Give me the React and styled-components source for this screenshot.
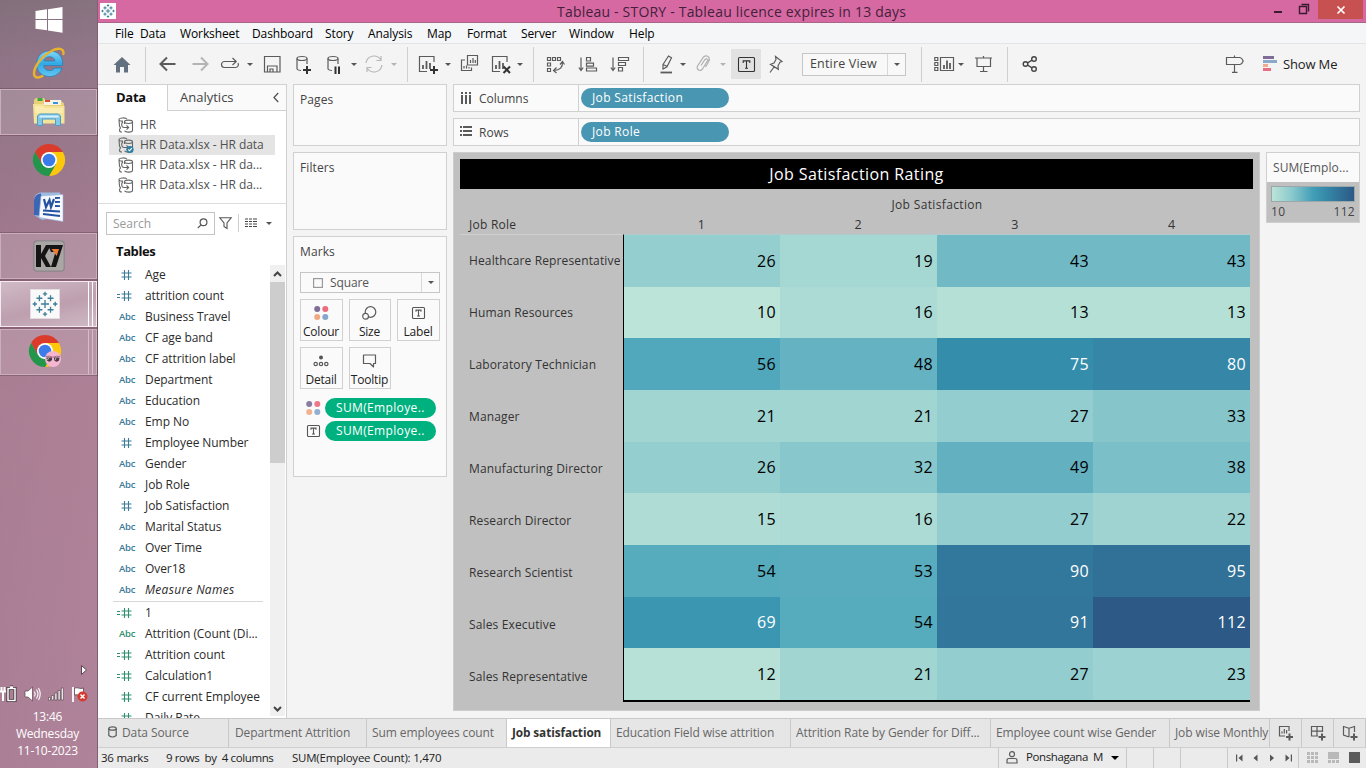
import React from 'react';
import styled, { createGlobalStyle, css } from 'styled-components';

const Global = createGlobalStyle`
  * { box-sizing: border-box; }
  html, body { margin: 0; padding: 0; }
  body { width: 1366px; height: 768px; overflow: hidden; font-family: "Open Sans", "Noto Sans", sans-serif; font-size: 12px; color: #333; }
  svg { display: block; flex: none; overflow: visible; }
`;

/* ---------- shell ---------- */
const Screen = styled.div`display: flex; width: 1366px; height: 768px; overflow: hidden;`;
const Taskbar = styled.aside`
  width: 98px; flex: none; display: flex; flex-direction: column;
  background: linear-gradient(100deg, rgba(60,60,60,.05), rgba(255,190,220,.06)), linear-gradient(180deg, #86727f 0, #93768a 60px, #98788a 130px, #a27a90 230px, #ac7f95 400px, #aa7f95 768px);
  border-right: 1px solid #805f70;
`;
const TaskSlot = styled.div`
  height: ${p => p.$h || 48}px; width: 97px; flex: none; display: flex; align-items: center; justify-content: center;
  margin-bottom: ${p => p.$mb || 0}px;
`;
const TaskButton = styled.div`
  height: 46px; width: 97px; margin-bottom: 2px; flex: none; display: flex; align-items: center;
  border: 1px solid ${p => (p.$active ? '#f4eaf0' : '#c9aebb')};
  outline: 1px solid rgba(90,50,70,.35);
  background: ${p => (p.$active ? 'linear-gradient(165deg,#d0bac6,#bd9fae 55%,#d0b9c5)' : 'rgba(255,255,255,.16)')};
`;
const TaskFace = styled.div`
  flex: 1; height: 100%; display: flex; align-items: center; justify-content: center;
  ${p => p.$stack && css`border-right: 1px solid ${p.$active ? '#fff' : '#d5bdc9'}; margin-right: 3px;`}
`;
const StackEdge = styled.div`width: 4px; height: 100%; border-left: 1px solid ${p => (p.$active ? '#fff' : '#d5bdc9')};`;
const AppTile = styled.div`width: 30px; height: 30px; background: #fafafa; border: 1px solid #e3dce0; display: flex; align-items: center; justify-content: center;`;
const TrayMore = styled.div`height: 14px; margin-top: 288px; display: flex; justify-content: flex-end; padding-right: 10px;`;
const Tray = styled.div`height: 20px; margin-top: 5px; display: flex; align-items: center; gap: 7px;`;
const Clock = styled.div`margin-top: 4px; text-align: center; color: #fff; font-size: 12px; line-height: 17px; letter-spacing: -.2px; padding-right: 2px;`;

const Main = styled.main`width: 1268px; display: flex; flex-direction: column; background: #f4f4f4;`;
const TitleBar = styled.header`
  height: 23px; flex: none; display: flex; background: #d669a2; border-bottom: 1px solid #a86587; color: #43213a;
`;
const AppBadge = styled.div`width: 16px; height: 16px; margin: 3px 0 0 2px; background: #fff; display: flex; align-items: center; justify-content: center;`;
const Title = styled.div`flex: 1; padding-left: 441px; font-size: 14px; line-height: 23px; letter-spacing: .2px; white-space: nowrap;`;
const WinButtons = styled.div`display: flex; align-items: flex-start;`;
const CloseButton = styled.div`width: 45px; height: 19px; margin-left: 9px; margin-right: 3px; background: #c75050; display: flex; align-items: center; justify-content: center;`;
const MenuBar = styled.nav`height: 21px; flex: none; display: flex; padding-left: 17px; background: #f4f6f8; border-bottom: 1px solid #e2e4e6; color: #000;`;
const MenuItem = styled.div`width: ${p => p.$w}px; flex: none; font-size: 12px; line-height: 22px; letter-spacing: -.1px; white-space: nowrap;`;

/* ---------- toolbar ---------- */
const Toolbar = styled.div`height: 40px; flex: none; display: flex; align-items: center; color: #333;`;
const Tool = styled.div`
  width: ${p => p.$w || 20}px; height: ${p => p.$h || 20}px; margin-left: ${p => p.$ml}px; flex: none;
  display: flex; align-items: center; justify-content: center; background: ${p => p.$bg || 'transparent'};
`;
const Caret = styled.div`
  width: 0; height: 0; flex: none; margin-left: ${p => p.$ml || 0}px; border: ${p => p.$s || 3}px solid transparent;
  border-top-color: ${p => p.$c || '#555'}; border-bottom: 0;
`;
const Separator = styled.div`width: 1px; height: 35px; flex: none; margin-left: ${p => p.$ml}px; background: #cfcfcf;`;
const FitSelect = styled.div`width: 104px; height: 23px; margin-left: 17px; flex: none; display: flex; border: 1px solid #c6c6c6; color: #444; background: #f8f8f8; line-height: 20px; font-size: 12.5px; letter-spacing: .17px;`;
const SelectText = styled.div`flex: 1; display: flex; align-items: center; gap: 7px; padding-left: ${p => p.$pl}px; white-space: nowrap;`;
const SelectArrow = styled.div`width: 18px; border-left: 1px solid #d8d8d8; display: flex; align-items: center; justify-content: center;`;
const ShowMe = styled.div`margin-left: 1px; margin-top: -1px; font-size: 13px; color: #222; letter-spacing: -.15px; white-space: nowrap;`;

/* ---------- data pane ---------- */
const Workspace = styled.div`height: 634px; flex: none; display: flex;`;
const DataPane = styled.section`width: 189px; height: 634px; flex: none; background: #fff; border-right: 1px solid #d0d0d0; display: flex; flex-direction: column; overflow: hidden;`;
const PaneTabs = styled.div`height: 27px; flex: none; display: flex;`;
const PaneTab = styled.div`
  height: 27px; font-size: 13px; line-height: 25px; white-space: nowrap; border-top: 1px solid #d0d0d0;
  ${p => p.$active
    ? css`width: 69px; padding-left: 18px; font-weight: 700; color: #111; letter-spacing: -.3px;`
    : css`flex: 1; display: flex; align-items: center; justify-content: space-between; padding: 0 7px 0 12px; color: #444; background: #fafafa; border-left: 1px solid #d0d0d0; border-bottom: 1px solid #d0d0d0;`}
`;
const Sources = styled.div`height: 93px; flex: none; padding: 4px 0 0 11px; border-bottom: 1px solid #ddd;`;
const SourceRow = styled.div`
  width: 166px; height: 20px; display: flex; align-items: center; gap: 6px; padding: 0 0 1px 9px; color: #505050;
  font-size: 12px; white-space: nowrap; letter-spacing: -.04px; background: ${p => (p.$on ? '#e4e4e4' : 'transparent')};
`;
const SearchRow = styled.div`height: 38px; flex: none; display: flex; align-items: center; padding-left: 8px;`;
const SearchBox = styled.div`width: 109px; height: 23px; border: 1px solid #c4c4c4; display: flex; align-items: center; justify-content: space-between; padding: 0 6px; color: #999; font-size: 12px;`;
const ThinRule = styled.div`width: 1px; height: 18px; margin: 0 6px; background: #ccc;`;
const PaneHeading = styled.div`height: 23px; flex: none; padding-left: 18px; font-size: 13px; font-weight: 700; line-height: 18px; color: #111; letter-spacing: -.4px;`;
const FieldArea = styled.div`flex: 1; display: flex; overflow: hidden; min-height: 0;`;
const FieldList = styled.div`width: 172px; flex: none;`;
const Field = styled.div`
  height: 21px; display: flex; align-items: center; padding-bottom: 3px; color: #2b2b2b; font-size: 12px; white-space: nowrap;
  font-style: ${p => (p.$italic ? 'italic' : 'normal')}; letter-spacing: ${p => (p.$italic ? 0.3 : -0.07)}px;
`;
const FieldMark = styled.div`
  width: 47px; flex: none; display: flex; justify-content: flex-end; padding-right: ${p => (p.$abc ? 9.5 : 13)}px; padding-top: 1px;
  color: ${p => (p.$measure ? '#2f8f6f' : '#3b7a99')}; font-size: 9.5px; font-weight: 600; font-style: normal; letter-spacing: -.1px;
`;
const FieldRule = styled.div`height: 1px; margin: 0 7px 1px 15px; background: #d8d8d8;`;
const Scrollbar = styled.div`width: 15px; height: 451px; background: #f0f0f0; display: flex; flex-direction: column; align-items: center;`;
const ScrollButton = styled.div`width: 15px; height: 17px; flex: none; display: flex; align-items: center; justify-content: center;`;
const ScrollThumb = styled.div`width: 15px; height: 181px; flex: none; margin-bottom: 237px; background: #cdcdcd;`;

/* ---------- cards ---------- */
const CardColumn = styled.section`width: 154px; flex: none; margin-left: 6px; display: flex; flex-direction: column; gap: 6px;`;
const Card = styled.div`height: ${p => p.$h}px; flex: none; border: 1px solid #d0d0d0; background: #fafafa; padding: 0 6px;`;
const CardTitle = styled.div`height: 30px; line-height: 30px; font-size: 12px; color: #444; letter-spacing: .1px;`;
const MarkSelect = styled.div`height: 21px; margin-top: 5px; border: 1px solid #c6c6c6; display: flex; color: #555; font-size: 12px; line-height: 18px; letter-spacing: -.1px;`;
const MarkGrid = styled.div`margin-top: 6px; display: grid; grid-template-columns: 43px 42px 43px; gap: 6px;`;
const MarkButton = styled.div`
  height: 42px; border: 1px solid #d0d0d0; display: flex; flex-direction: column; align-items: center; justify-content: space-between;
  padding: 3px 1px 0 0; font-size: 12px; line-height: 17px; color: #222; letter-spacing: -.2px; white-space: nowrap;
`;
const EncodingRow = styled.div`height: 20px; margin-top: ${p => p.$mt}px; display: flex; align-items: center; padding-left: 6px; gap: 4px;`;
const Pill = styled.div`
  width: ${p => p.$w}px; height: 20px; border-radius: 10px; padding-left: 11px; line-height: 19px; color: #fff; white-space: nowrap;
  background: ${p => p.$c}; font-size: 12px; letter-spacing: .35px;
`;

/* ---------- view ---------- */
const ViewColumn = styled.section`margin-left: 6px; width: 907px; flex: none; display: flex; flex-direction: column; gap: 6px;`;
const Shelf = styled.div`height: 28px; flex: none; display: flex; align-items: center; border: 1px solid #d0d0d0; background: #fafafa;`;
const ShelfLabel = styled.div`width: 125px; height: 26px; display: flex; align-items: center; gap: 7px; padding-left: 6px; margin-right: 2px; border-right: 1px solid #d0d0d0; font-size: 12px; color: #444;`;
const ViewRow = styled.div`display: flex; gap: 6px; align-items: flex-start;`;
const Sheet = styled.div`width: 807px; height: 559px; border: 1px solid #cdcdcd; background: #c0c0c0; padding: 6px;`;
const SheetTitle = styled.h1`margin: 0; width: 793px; height: 30px; background: #000; color: #fff; font-weight: 400; font-size: 16px; line-height: 30px; text-align: center; letter-spacing: .4px;`;
const AxisTitle = styled.div`height: 24px; padding: 7px 0 0 164px; width: 790px; text-align: center; line-height: 18px; font-size: 12px; color: #333; letter-spacing: .35px;`;
const HeaderRow = styled.div`width: 790px; height: 21px; display: grid; grid-template-columns: 163px repeat(4, 1fr); line-height: 23px; color: #333;`;
const HeaderCell = styled.div`text-align: ${p => (p.$left ? 'left' : 'center')}; padding-left: ${p => (p.$left ? 9 : 0)}px; font-size: ${p => (p.$left ? 12 : 12.5)}px; letter-spacing: ${p => (p.$left ? 0.25 : 0)}px;`;
const HeatTable = styled.div`width: 790px; height: 468px; display: grid; grid-template-columns: 164px 1fr;`;
const RowLabels = styled.div`display: grid; grid-template-rows: repeat(9, 1fr); border-right: 1px solid #000; border-top: 1px solid #cfcfcf; padding-left: 9px; color: #333; font-size: 12px; letter-spacing: .14px;`;
const RowLabel = styled.div`display: flex; align-items: center; white-space: nowrap;`;
const HeatGrid = styled.div`display: grid; grid-template: repeat(9, 1fr) / 156px 157px 156px 157px; border-bottom: 2px solid #000; border-top: 1px solid #b0ccd0;`;
const HeatCell = styled.div`display: flex; align-items: center; justify-content: flex-end; padding-right: 4px; font-size: 16px; background: ${p => p.$bg}; color: ${p => (p.$light ? '#fff' : '#000')}; letter-spacing: .35px;`;
const Legend = styled.div`width: 94px; height: 71px; border: 1px solid #cfcfcf; background: #c0c0c0;`;
const LegendTitle = styled.div`height: 29px; background: #fafafa; padding-left: 6px; line-height: 30px; font-size: 12px; color: #555; white-space: nowrap; letter-spacing: .1px;`;
const LegendBar = styled.div`height: 16px; margin: 4px 4px 0; border: 1px solid #9ba7a9; background: linear-gradient(90deg,#bce4d8,#89c8cc 25%,#419eb6 50%,#3586a7 68%,#2c5985);`;
const LegendRange = styled.div`display: flex; justify-content: space-between; padding: 0 4px; line-height: 19px; color: #444; letter-spacing: .3px;`;

/* ---------- footer ---------- */
const SheetTabs = styled.div`height: 30px; flex: none; display: flex; background: #e6e6e6; border-top: 1px solid #c9c9c9; border-bottom: 1px solid #cfcfcf;`;
const SheetTab = styled.div`
  width: ${p => p.$w}px; height: 28px; flex: none; border-right: 1px solid #c9c9c9; padding: 0 0 2px ${p => p.$pl || 5}px; display: flex; align-items: center; gap: 5px;
  font-size: 12px; letter-spacing: -.1px; white-space: nowrap; overflow: hidden; color: #666;
  ${p => p.$active && css`background: #fff; font-weight: 700; color: #333; letter-spacing: -.1px; font-size: 11.8px; padding-bottom: 3px;`}
`;
const NewTab = styled.div`width: 32px; height: 28px; flex: none; border-right: 1px solid #c9c9c9; display: flex; align-items: center; justify-content: center;`;
const StatusBar = styled.footer`height: 20px; flex: none; display: flex; align-items: center; background: #ebebeb; color: #222; font-size: 11.5px;`;
const StatusText = styled.div`width: ${p => p.$w}px; flex: none; margin-left: ${p => p.$ml || 0}px; padding-bottom: 2px; letter-spacing: ${p => p.$ls || 0}px; white-space: pre;`;
const StatusCell = styled.div`width: ${p => p.$w}px; height: 20px; flex: none; border-left: 1px solid #c9c9c9; display: flex; align-items: center; padding-left: ${p => p.$pl || 0}px; padding-bottom: 1px; gap: ${p => p.$gap || 0}px;`;

/* ---------- icons ---------- */
const G = '#5b5b5b';
const Ico = ({ children, w = 20, h = 20, c = G, sw = 1.2 }) => (
  <svg width={w} height={h} viewBox={`0 0 ${w} ${h}`} fill="none" stroke={c} strokeWidth={sw}>{children}</svg>
);
const Plus = ({ x, y, r = 4 }) => <path d={`M${x - r} ${y}H${x + r}M${x} ${y - r}V${y + r}`} stroke="#333" strokeWidth="2" />;

const TableauMark = ({ size, c = '#3f7d99' }) => {
  const arms = [[14, 14, 4.4], [14, 3, 2.3], [14, 25, 2.3], [3, 14, 2.3], [25, 14, 2.3], [8, 7.8, 3.2], [20, 7.8, 3.2], [8, 20.2, 3.2], [20, 20.2, 3.2]];
  return (
    <svg width={size} height={size} viewBox="0 0 28 28" stroke={c} strokeWidth={size < 20 ? 2 : 1.4}>
      {arms.map(([x, y, r], i) => <path key={i} d={`M${x - r} ${y}H${x + r}M${x} ${y - r}V${y + r}`} />)}
    </svg>
  );
};
const ChromeDisc = () => (
  <>
    <path d="M2.1 8A16 16 0 0 1 29.9 8H16L9 20z" fill="#db3b2b" />
    <path d="M29.900 8A16 16 0 0 1 16 32L23 20 16 8z" fill="#fdc70c" />
    <path d="M16 32A16 16 0 0 1 2.100 8L9 20 23 20z" fill="#22964a" />
    <circle cx="16" cy="16" r="8" fill="#fff" /><circle cx="16" cy="16" r="6.300" fill="#3b7cea" />
  </>
);
const Chrome = () => <svg width="32" height="32" viewBox="0 0 32 32"><ChromeDisc /></svg>;
const ChromeProfile = () => (
  <svg width="32" height="34" viewBox="0 0 32 34">
    <ChromeDisc />
    <circle cx="24" cy="24" r="8" fill="#f6b6d0" />
    <path d="M17 21.500q3.500-1 7 .8 3.500-1.800 7-.8" stroke="#9c7187" fill="none" />
    <path d="M17.500 22.500h5.500v2.500q-2.500 3-5 .5zM25 22.500h5.500l-.5 3q-2.500 2.500-5-.5z" fill="#4a3a45" />
    <path d="M19.500 23l-1 2M27 23l-1 2" stroke="#cdbac5" />
  </svg>
);
const WindowsLogo = () => (
  <svg width="28" height="26" viewBox="0 0 28 26" fill="#fff"><path d="M.5 4L12 2.3V12H.5zM13 2.2L27.5 0v12H13zM.5 13H12v10.2L.5 21.700zM13 13h14.500v12.800L13 23.500z" /></svg>
);
const Explorer = () => (
  <svg width="32" height="30" viewBox="0 0 32 30">
    <path d="M1 5V3l2-2h8l1.500 2.500H28l3 3V26H1z" fill="#e9cf77" />
    <path d="M4.500 1h5v3h-5z" fill="#39a843" /><path d="M11 3h17v5H11z" fill="#f7f4e6" /><path d="M12 3h5v2h-5z" fill="#d8502c" /><path d="M20 5h5v2h-5z" fill="#3c95d8" />
    <path d="M0 7h10l2 2h19.500v17.500H1z" fill="#f5e398" /><path d="M2 9h8l2 2h18v5H2z" fill="#fbf0b8" opacity=".7" />
    <path d="M4.500 28.500V19l2-2h19l2 2v9.500h-5V22h-13v6.500z" fill="#83c8e8" stroke="#4b9fc9" />
    <path d="M6.500 19.500h19" stroke="#d5f1fb" strokeWidth="2" />
  </svg>
);
const Explore = () => (
  <svg width="32" height="32" viewBox="0 0 32 32">
    <defs><linearGradient id="ie" x1="0" y1="0" x2="0" y2="1"><stop stopColor="#82d8fa" /><stop offset=".5" stopColor="#31a9e5" /><stop offset="1" stopColor="#63c5f0" /></linearGradient></defs>
    <path d="M16.500 4C9 4 3.500 9.700 3.500 17S9 29.500 16.500 29.500c6 0 10.700-3.300 12.500-8.500h-7.500c-1 1.700-2.700 2.500-5 2.500-3.300 0-5.500-2-5.800-5h18.800C30.500 9.500 25 4 16.500 4zM10.900 14c.6-2.600 2.700-4.300 5.600-4.300s5 1.700 5.500 4.300z" fill="url(#ie)" stroke="#1c7fb8" strokeWidth=".7" />
    <path d="M30.500 7C31 1 25 .5 18.500 4 9.500 8.500 1.500 19 1 26c-.3 4.800 3.700 5.600 8.500 3" fill="none" stroke="#e9b32d" strokeWidth="2.400" strokeLinecap="round" />
  </svg>
);
const Word = () => (
  <svg width="31" height="30" viewBox="0 0 31 30">
    <path d="M1 7Q2 1 8 .5H27l1 4V24L9 28 1 23z" fill="#9dbbe3" />
    <path d="M1 8Q2 2 8 1.500L10 24 1 23z" fill="#3b66b4" />
    <path d="M8 4l22-1.500V29.500L6 25.500z" fill="#f6f9fe" stroke="#9eb4d8" strokeWidth=".6" />
    <path d="M11 7l2 8 3.500-7 1.500 7L21 7" fill="none" stroke="#2552a0" strokeWidth="2.200" />
    <path d="M22 6l5-.2M22 10l5-.2M22 14l5 .2M10 18.500l17 1M10 22l17 2" stroke="#2552a0" strokeWidth="1.800" />
  </svg>
);
const K7 = () => (
  <svg width="32" height="32" viewBox="0 0 32 32">
    <rect x=".8" y=".8" width="30.400" height="30.400" rx="3.500" fill="#aaa6a6" stroke="#8b8589" strokeWidth="1.200" />
    <path d="M3 5h5v9l5-9h5l-6 11 6 11h-5l-5-9v9H3z" fill="#151515" /><path d="M15 5h15L23 27h-5l4.500-15H18z" fill="#151515" />
    <path d="M18.500 9h7.500l-2.300 7z" fill="#ee7b35" />
  </svg>
);
const DbIcon = ({ checked }) => (
  <Ico w={16} h={16} c="#666" sw={1.1}>
    <path d="M4 15H3Q1.200 14.500 1.500 12.500L2.500 11 1.500 9 1 2.500C1 .7 8 .2 9 2.200M1 3c1 1.200 2 1.300 4 1M5 4.500Q3.500 6 3.700 8" />
    <ellipse cx="10.500" cy="4.800" rx="4" ry="1.700" /><path d="M6.500 5v2M14.500 5v8.500c0 2-7 2.200-8 .2M3.700 8Q4 10.500 6 10.500h4.500M8.500 8.300l2.200 2.200-2.200 2.200" />
    {checked && <g stroke="none"><circle cx="12" cy="12.500" r="3.600" fill="#2f7ea3" /><path d="M10.300 12.500l1.300 1.300 2.200-2.600" fill="none" stroke="#fff" /></g>}
  </Ico>
);
const HashMark = ({ calc }) => (
  <svg width={calc ? 15 : 11} height="10" viewBox={calc ? '-4 0 15 10' : '0 0 11 10'} stroke="currentColor" strokeWidth="1.100" fill="none">
    <path d="M3.500 0V10M7.500 0V10M.5 3H10.500M.5 7H10.500" />{calc && <path d="M-4 3.500h3M-4 6.500h3" />}
  </svg>
);
const ColourDots = ({ pale }) => (
  <svg width="15" height="14" viewBox="0 0 15 14" opacity={pale ? 0.9 : 1}>
    <circle cx="3.200" cy="3" r="3" fill="#7f6f98" /><circle cx="11.300" cy="3" r="3" fill="#ed6b7b" />
    <circle cx="3.200" cy="11" r="3" fill="#f1a983" /><circle cx="11.300" cy="11" r="3" fill="#86a7cb" />
  </svg>
);
const LabelT = ({ w = 13, h = 12, c = '#555', r = 2.5 }) => (
  <svg width={w} height={h} viewBox={`0 0 ${w} ${h}`} fill="none" stroke={c} strokeWidth="1.100">
    <rect x=".5" y=".5" width={w - 1} height={h - 1} rx="1" />
    <path d={`M${w / 2 - r} ${h * 0.4}V${h * 0.26}H${w / 2 + r}V${h * 0.4}M${w / 2} ${h * 0.26}V${h * 0.75}M${w / 2 - 1.5} ${h * 0.75}h3`} />
  </svg>
);
const ChartBox = () => <><path d="M16 8V2.500H1.500V17.500H9" /><path d="M5 15V11M8.500 15V7M12 15V9" strokeWidth="1.800" /></>;

/* ---------- data ---------- */
const MENU = [['File', 25], ['Data', 40], ['Worksheet', 72], ['Dashboard', 73], ['Story', 43], ['Analysis', 59], ['Map', 40], ['Format', 54], ['Server', 48], ['Window', 60], ['Help', 40]];
const DIMENSIONS = [['#', 'Age'], ['=#', 'attrition count'], ['Abc', 'Business Travel'], ['Abc', 'CF age band'], ['Abc', 'CF attrition label'], ['Abc', 'Department'], ['Abc', 'Education'], ['Abc', 'Emp No'], ['#', 'Employee Number'], ['Abc', 'Gender'], ['Abc', 'Job Role'], ['#', 'Job Satisfaction'], ['Abc', 'Marital Status'], ['Abc', 'Over Time'], ['Abc', 'Over18'], ['Abc', 'Measure Names', true]];
const MEASURES = [['=#', '1'], ['Abc', 'Attrition (Count (Di...'], ['=#', 'Attrition count'], ['=#', 'Calculation1'], ['#', 'CF current Employee'], ['#', 'Daily Rate']];
const ROLES = [
  ['Healthcare Representative', 26, 19, 43, 43], ['Human Resources', 10, 16, 13, 13], ['Laboratory Technician', 56, 48, 75, 80],
  ['Manager', 21, 21, 27, 33], ['Manufacturing Director', 26, 32, 49, 38], ['Research Director', 15, 16, 27, 22],
  ['Research Scientist', 54, 53, 90, 95], ['Sales Executive', 69, 54, 91, 112], ['Sales Representative', 12, 21, 27, 23],
];
const RAMP = ['bce4d8', 'aedcd5', 'a1d5d2', '95cecf', '89c8cc', '7ec1ca', '72bac6', '66b2c2', '59acbe', '4ba5ba', '419eb6', '3b96b2', '358ead', '3586a7', '347ea1', '32779b', '316f96', '2f6790', '2d608a', '2c5985'];
const rampColor = v => {
  const t = ((v - 10) / 102) * 19;
  const i = Math.min(18, Math.floor(t));
  const ch = (s, k) => parseInt(s.slice(k, k + 2), 16);
  const mix = k => Math.round(ch(RAMP[i], k) + (ch(RAMP[i + 1], k) - ch(RAMP[i], k)) * (t - i));
  return `rgb(${mix(0)},${mix(2)},${mix(4)})`;
};

const FieldItem = ({ kind, name, italic, measure }) => (
  <Field $italic={italic}>
    <FieldMark $abc={kind === 'Abc'} $measure={measure}>{kind === 'Abc' ? 'Abc' : <HashMark calc={kind === '=#'} />}</FieldMark>{name}
  </Field>
);

const Sidebar = () => (
  <Taskbar>
    <TaskSlot $h={40}><WindowsLogo /></TaskSlot>
    <TaskSlot $h={46} $mb={3}><Explore /></TaskSlot>
    <TaskButton><TaskFace><Explorer /></TaskFace></TaskButton>
    <TaskSlot $h={46}><Chrome /></TaskSlot>
    <TaskSlot $h={48} $mb={2}><Word /></TaskSlot>
    <TaskButton><TaskFace><K7 /></TaskFace></TaskButton>
    <TaskButton $active><TaskFace $stack $active><AppTile><TableauMark size={26} /></AppTile></TaskFace><StackEdge $active /></TaskButton>
    <TaskButton><TaskFace $stack><ChromeProfile /></TaskFace><StackEdge /></TaskButton>
    <TrayMore><svg width="6" height="10" viewBox="0 0 6 10"><path d="M.5 .5L5.500 5 .5 9.500z" fill="#fff" stroke="#5b4350" /></svg></TrayMore>
    <Tray>
      <svg width="17" height="16" viewBox="0 0 17 16" fill="none" stroke="#fff" strokeWidth="1.500"><path d="M1.500 1v4M4.500 1v4M0 5.500h6M3 6v9" strokeWidth="2" /><path d="M8 2.500h7v12H8zM10 1h3" stroke="#3b2c35" strokeWidth="3" /><path d="M8 2.500h7v12H8zM10 1h3" /></svg>
      <svg width="17" height="16" viewBox="0 0 17 16" fill="#fff" stroke="#5b4350" strokeWidth=".7"><path d="M1 5h3l4.500-4v14L4 11H1z" /><path d="M10.500 5.500q1.500 2.500 0 5M12.500 3.500q3 4.500 0 9M14.500 2q3.500 6 0 12" fill="none" stroke="#fff" strokeWidth="1.100" /></svg>
      <svg width="16" height="14" viewBox="0 0 16 14" fill="#fff" stroke="#4a3842" strokeWidth=".6"><path d="M.5 10.500h2v2.500h-2zM3.700 8.500h2V13h-2zM6.900 6h2v7h-2zM10.100 3.500h2V13h-2zM13.300 1h2v12h-2z" /></svg>
      <svg width="17" height="16" viewBox="0 0 17 16"><path d="M2 1v15" stroke="#fff" strokeWidth="1.800" /><path d="M3.500 2c4-1 5 1.500 9 0v7c-4 1.500-5-1-9 0z" fill="#fff" stroke="#4a3842" strokeWidth=".7" /><circle cx="11.500" cy="10.500" r="5" fill="#d5392f" /><path d="M9.500 8.500l4 4M13.500 8.500l-4 4" stroke="#fff" strokeWidth="1.500" /></svg>
    </Tray>
    <Clock>13:46<br />Wednesday<br />11-10-2023</Clock>
  </Taskbar>
);

const ToolStrip = () => (
  <Toolbar>
    <Tool $ml={14}><Ico><path d="M10 3L1.500 11H4V18.500H8V13h4v5.500h4V11h2.500z" fill="#637080" stroke="none" /></Ico></Tool>
    <Separator $ml={13} />
    <Tool $ml={12}><Ico sw={2}><path d="M17.500 10H3M9 3.500L2.500 10 9 16.500" /></Ico></Tool>
    <Tool $ml={12}><Ico sw={2} c="#b4b4b4"><path d="M2.500 10H17M11 3.500L17.500 10 11 16.500" /></Ico></Tool>
    <Tool $ml={10}><Ico><path d="M15.500 7.500H4.500a3 3 0 0 0 0 6h11a3 3 0 0 0 2.500-4.500M12.500 4l3.700 3.500-3.700 3.500" /></Ico></Tool>
    <Caret $ml={7} />
    <Tool $ml={9}><Ico><path d="M2.500 2.500H18V18H2.500zM5.500 18v-6H15v6M8 18v-3h3v3" /></Ico></Tool>
    <Tool $ml={12}><Ico><ellipse cx="8" cy="4.500" rx="5" ry="2" /><path d="M3 4.500V15q1 1.500 4 1.500M13 4.500V10" /><Plus x={13} y={16} /></Ico></Tool>
    <Tool $ml={11}><Ico><ellipse cx="8" cy="4.500" rx="5" ry="2" /><path d="M3 4.500V15q1 1.500 4 1.500M13 4.500V10" /><path d="M10.500 12.500v7.500M14 12.500v7.500" stroke="#333" strokeWidth="2" /></Ico></Tool>
    <Caret $ml={6} />
    <Tool $ml={7}><Ico c="#b8b8b8"><path d="M2 9A8 8 0 0 1 16.500 5.500M18 11A8 8 0 0 1 3.500 14.500M17 2v4.500h-4.500M3 18v-4.500h4.500" /></Ico></Tool>
    <Caret $ml={7} $c="#b4b4b4" />
    <Separator $ml={10} />
    <Tool $ml={10}><Ico><ChartBox /><Plus x={16} y={16} /></Ico></Tool>
    <Caret $ml={7} />
    <Tool $ml={9}><Ico><path d="M7.500 1.500H17.500V11H7.500zM5 6H1.500V16.500H11.500V13.500" /><path d="M10.500 9V6M13 9V4M15.300 9V6M4 14.500V12M6.500 14.500V11.500M9 14.500V13" /></Ico></Tool>
    <Tool $ml={11}><Ico><ChartBox /><path d="M12.500 12.500l6.500 6.500M19 12.500l-6.500 6.500" stroke="#333" strokeWidth="2" /></Ico></Tool>
    <Caret $ml={6} />
    <Separator $ml={10} />
    <Tool $ml={12}><Ico><path d="M1.500 3.500h3v3h-3zM6.500 3.500h3v3h-3zM11.500 3.500h3v3h-3zM1.500 9h3v3h-3zM1.500 14.500h3v3h-3zM16.500 8q.5 8-8.500 8.500M14 10.500L16.500 7.500l2 3M10.500 13.500l-3 3 3 2.500" /></Ico></Tool>
    <Tool $ml={12}><Ico><path d="M3 3.500V16M.8 13.500L3 16.500l2.200-3M8.500 3.500h4v3.500h-4zM8.500 9.200h7v3h-7zM8.500 14h10v3h-10z" /></Ico></Tool>
    <Tool $ml={12}><Ico><path d="M3 3.500V16M.8 13.500L3 16.500l2.200-3M8.500 3.500h10v3h-10zM8.500 8.500h7v3h-7zM8.500 13.500h4v3.500h-4z" /></Ico></Tool>
    <Separator $ml={13} />
    <Tool $ml={12}><Ico><path d="M4.500 18.500H16" strokeWidth="1.800" /><path d="M7 10.500L12.500 2l3 1.800-4.500 9-4 2.200zM7 10.500l4.500 2" /></Ico></Tool>
    <Caret $ml={4} />
    <Tool $ml={7}><Ico c="#b0b0b0"><path d="M8 11.500l4-6q2-1.500 3 .5l-5.500 9q-2.500 3-5 0-.8-1.500 0-3l6-9q3-2.500 5.500.5 1 2-.5 4.500l-3 5" /></Ico></Tool>
    <Caret $ml={7} $c="#b4b4b4" />
    <Tool $ml={5} $w={30} $h={30} $bg="#e2e2e2"><LabelT w={17} h={15} c="#333" r={3.3} /></Tool>
    <Tool $ml={4}><Ico><path d="M10.500 2.500l6.500 5-2 .8-2 3.500.3 3.500-7.800-5 3.500-1.300 2-3.500zM9 13l-4 5.500" /></Ico></Tool>
    <FitSelect><SelectText $pl={7}>Entire View</SelectText><SelectArrow><Caret $s={3.5} /></SelectArrow></FitSelect>
    <Separator $ml={15} />
    <Tool $ml={12}><Ico><path d="M6.500 3.500H19.500V16.500H6.500zM.8 3.500h3v3h-3zM.8 8.500h3v3h-3zM.8 13.500h3v3h-3z" /><path d="M10 15v-4M13 15V6.500M16 15V9" strokeWidth="1.800" /></Ico></Tool>
    <Caret $ml={4} />
    <Tool $ml={10}><Ico><path d="M1 4H18M3 4V12.500H16.500V4M9.500 2v2M9.500 12.500V17M6 17.500h7.500" /></Ico></Tool>
    <Separator $ml={13} />
    <Tool $ml={12}><Ico sw={1.4} c="#444"><circle cx="5.500" cy="10" r="2.300" /><circle cx="14" cy="5" r="2.300" /><circle cx="14" cy="15" r="2.300" /><path d="M7.500 9L12 6.200M7.500 11l4.500 2.800" /></Ico></Tool>
    <Tool $ml={185}><Ico><path d="M1.500 3.500H15q2 .3 3.200 3.500Q17 10.200 15 10.500H1.500zM9.500 1.500v2M9.500 10.500V18M7 18.300h5.500" /></Ico></Tool>
    <Tool $ml={17}><svg width="20" height="20"><path fill="#7e6d96" d="M1 2h11v3H1z" /><path fill="#8aa9cb" d="M1 6h14v3H1z" /><path fill="#f0ac8c" d="M1 10h5v3H1z" /><path fill="#e86f83" d="M1 14h8v3H1z" /></svg></Tool>
    <ShowMe>Show Me</ShowMe>
  </Toolbar>
);

const DataPanel = () => (
  <DataPane>
    <PaneTabs>
      <PaneTab $active>Data</PaneTab>
      <PaneTab>Analytics<svg width="6" height="9" viewBox="0 0 6 9" fill="none" stroke="#555" strokeWidth="1.300"><path d="M5.200 0L1 4.500 5.200 9" /></svg></PaneTab>
    </PaneTabs>
    <Sources>
      <SourceRow><DbIcon />HR</SourceRow>
      <SourceRow $on><DbIcon checked />HR Data.xlsx - HR data</SourceRow>
      <SourceRow><DbIcon />HR Data.xlsx - HR da...</SourceRow>
      <SourceRow><DbIcon />HR Data.xlsx - HR da...</SourceRow>
    </Sources>
    <SearchRow>
      <SearchBox>Search<svg width="11" height="11" viewBox="0 0 11 11" fill="none" stroke="#555" strokeWidth="1.200"><circle cx="6.500" cy="4.200" r="3.400" /><path d="M4 6.800L.8 10" /></svg></SearchBox>
      <Tool $ml={3} $w={14}><svg width="13" height="12" viewBox="0 0 13 12" fill="none" stroke="#555" strokeWidth="1.100"><path d="M.8.8H12.200L8 6V11.500L5 9.500V6z" /></svg></Tool>
      <ThinRule />
      <svg width="12" height="10" viewBox="0 0 12 10" stroke="#444" strokeWidth="1.100"><path d="M0 1H3M4 1H7M8 1H12M0 3.500H3M4 3.500H7M8 3.500H12M0 6H3M4 6H7M8 6H12M0 8.500H3M4 8.500H7M8 8.500H12" /></svg>
      <Caret $ml={9} $s={3.5} />
    </SearchRow>
    <PaneHeading>Tables</PaneHeading>
    <FieldArea>
      <FieldList>
        {DIMENSIONS.map(([k, n, it]) => <FieldItem key={n} kind={k} name={n} italic={it} />)}
        <FieldRule />
        {MEASURES.map(([k, n]) => <FieldItem key={n} kind={k} name={n} measure />)}
      </FieldList>
      <Scrollbar>
        <ScrollButton><svg width="9" height="6" fill="none" stroke="#444" strokeWidth="2"><path d="M1 5L4.500 1.500 8 5" /></svg></ScrollButton>
        <ScrollThumb />
        <ScrollButton><svg width="9" height="6" fill="none" stroke="#444" strokeWidth="2"><path d="M1 1L4.500 4.500 8 1" /></svg></ScrollButton>
      </Scrollbar>
    </FieldArea>
  </DataPane>
);

const Cards = () => (
  <CardColumn>
    <Card $h={62}><CardTitle>Pages</CardTitle></Card>
    <Card $h={78}><CardTitle>Filters</CardTitle></Card>
    <Card $h={241}>
      <CardTitle>Marks</CardTitle>
      <MarkSelect><SelectText $pl={12}><Ico w={10} h={10} c="#999"><rect x=".6" y=".6" width="8.800" height="8.800" /></Ico>Square</SelectText><SelectArrow><Caret $s={3.5} /></SelectArrow></MarkSelect>
      <MarkGrid>
        <MarkButton><Tool $ml={0}><ColourDots /></Tool>Colour</MarkButton>
        <MarkButton><Tool $ml={0}><Ico w={15} h={14}><circle cx="8.500" cy="6" r="5.300" /><circle cx="3.600" cy="10.300" r="2.900" fill="#fafafa" /></Ico></Tool>Size</MarkButton>
        <MarkButton><Tool $ml={0}><LabelT /></Tool>Label</MarkButton>
        <MarkButton><Tool $ml={0}><Ico w={16} h={12}><circle cx="8" cy="2.500" r="2" fill="#555" stroke="none" /><circle cx="2.700" cy="9" r="1.700" /><circle cx="8" cy="9" r="1.700" /><circle cx="13.300" cy="9" r="1.700" /></Ico></Tool>Detail</MarkButton>
        <MarkButton><Tool $ml={0}><Ico w={15} h={14}><path d="M1.500 1H13.500V9.500H11.500V13L8 9.500H1.500z" strokeLinejoin="round" /></Ico></Tool>Tooltip</MarkButton>
      </MarkGrid>
      <EncodingRow $mt={9}><ColourDots pale /><Pill $c="#00b180" $w={111}>SUM(Employe..</Pill></EncodingRow>
      <EncodingRow $mt={3}><Tool $ml={0} $w={15}><LabelT /></Tool><Pill $c="#00b180" $w={111}>SUM(Employe..</Pill></EncodingRow>
    </Card>
  </CardColumn>
);

const View = () => (
  <ViewColumn>
    <Shelf>
      <ShelfLabel><svg width="12" height="12" stroke="#5a5a5a" strokeWidth="2"><path d="M2 0v2M6 0v2M10 0v2M2 3v9M6 3v9M10 3v9" /></svg>Columns</ShelfLabel>
      <Pill $c="#4996b2" $w={148}>Job Satisfaction</Pill>
    </Shelf>
    <Shelf>
      <ShelfLabel><svg width="12" height="12" stroke="#5a5a5a" strokeWidth="2"><path d="M0 1h2M0 5h2M0 9h2M3 1h9M3 5h9M3 9h9" /></svg>Rows</ShelfLabel>
      <Pill $c="#4996b2" $w={148}>Job Role</Pill>
    </Shelf>
    <ViewRow>
      <Sheet>
        <SheetTitle>Job Satisfaction Rating</SheetTitle>
        <AxisTitle>Job Satisfaction</AxisTitle>
        <HeaderRow><HeaderCell $left>Job Role</HeaderCell>{[1, 2, 3, 4].map(n => <HeaderCell key={n}>{n}</HeaderCell>)}</HeaderRow>
        <HeatTable>
          <RowLabels>{ROLES.map(([r]) => <RowLabel key={r}>{r}</RowLabel>)}</RowLabels>
          <HeatGrid>
            {ROLES.flatMap(([r, ...vals]) => vals.map((v, i) => <HeatCell key={r + i} $bg={rampColor(v)} $light={v > 60}>{v}</HeatCell>))}
          </HeatGrid>
        </HeatTable>
      </Sheet>
      <Legend>
        <LegendTitle>SUM(Emplo...</LegendTitle>
        <LegendBar />
        <LegendRange><span>10</span><span>112</span></LegendRange>
      </Legend>
    </ViewRow>
  </ViewColumn>
);

const Footer = () => (
  <>
    <SheetTabs>
      <SheetTab $w={131} $pl={10}><Ico w={9} h={12}><ellipse cx="4.500" cy="2.500" rx="3.700" ry="1.700" /><path d="M.8 2.500V9.500q3.700 3 7.400 0V2.500" /></Ico>Data Source</SheetTab>
      <SheetTab $w={138} $pl={6}>Department Attrition</SheetTab>
      <SheetTab $w={140}>Sum employees count</SheetTab>
      <SheetTab $w={104} $active>Job satisfaction</SheetTab>
      <SheetTab $w={180}>Education Field wise attrition</SheetTab>
      <SheetTab $w={200}>Attrition Rate by Gender for Diff...</SheetTab>
      <SheetTab $w={179}>Employee count wise Gender</SheetTab>
      <SheetTab $w={100}>Job wise Monthly</SheetTab>
      <NewTab><Ico w={16} h={16}><path d="M11 6V1.500H1.500V11H7M4 8.500V6.500M6.300 8.500V4M8.600 8.500V5" /><path d="M8 12h7M11.500 8.500v7" strokeWidth="2" /></Ico></NewTab>
      <NewTab><Ico w={16} h={16}><path d="M12.500 7V1.500H1.500V11H8M7 1.500V11M1.500 6.200H12" /><path d="M8.500 12h7M12 8.500v7" strokeWidth="2" /></Ico></NewTab>
      <NewTab><Ico w={16} h={16}><path d="M7 3.200L1.500 1.500V10L7 12M7 3.200L12.500 1.500V7M7 3.200V12" /><path d="M8.500 12h7M12 8.500v7" strokeWidth="2" /></Ico></NewTab>
    </SheetTabs>
    <StatusBar>
      <StatusText $ml={3} $w={65} $ls={-0.25}>36 marks</StatusText>
      <StatusText $w={126} $ls={-0.38}>{'9 rows  by  4 columns'}</StatusText>
      <StatusText $w={706} $ls={-0.22}>SUM(Employee Count): 1,470</StatusText>
      <StatusCell $w={128} $pl={7}>
        <Ico w={12} h={13}><circle cx="6" cy="3.200" r="2.500" /><path d="M1 12V9.500Q1 7.500 3 7.500H9Q11 7.500 11 9.500V12z" /></Ico>
        <StatusText $ml={8} $w={85} $ls={-0.4}>Ponshagana  M</StatusText>
        <Caret $s={4} $c="#000" />
      </StatusCell>
      <StatusCell $w={27} /><StatusCell $w={27} /><StatusCell $w={47} />
      <StatusCell $w={71} $pl={8} $gap={10}>
        <svg width="7" height="8" fill="#555"><path d="M0 .5h1.200v7H0zM6.500 .5v7L2.500 4z" /></svg>
        <svg width="6" height="8" fill="#555"><path d="M4.500 .5v7L.5 4z" /></svg>
        <svg width="6" height="8" fill="#555"><path d="M1 .5v7L5 4z" /></svg>
        <svg width="7" height="8" fill="#555"><path d="M5.800 .5H7v7H5.800zM.5 .5v7L4.500 4z" /></svg>
      </StatusCell>
      <StatusCell $w={69} $pl={8} $gap={10}>
        <svg width="11" height="11" fill="#b9b9b9"><path d="M0 0h3v3H0zM4 0h3v3H4zM8 0h3v3H8zM0 4h3v3H0zM4 4h3v3H4zM8 4h3v3H8zM0 8h3v3H0zM4 8h3v3H4zM8 8h3v3H8z" /></svg>
        <svg width="11" height="11" fill="#b9b9b9"><path d="M0 0h11v7H0zM0 8h3v3H0zM4 8h3v3H4zM8 8h3v3H8z" /></svg>
        <svg width="11" height="11" fill="#5c5c5c"><path d="M0 0h11v11H0z" /></svg>
      </StatusCell>
    </StatusBar>
  </>
);

export default function App() {
  return (
    <>
      <Global />
      <Screen>
        <Sidebar />
        <Main>
          <TitleBar>
            <AppBadge><TableauMark size={14} /></AppBadge>
            <Title>Tableau - STORY - Tableau licence expires in 13 days</Title>
            <WinButtons>
              <svg width="36" height="19" viewBox="0 0 36 19" fill="none" stroke="#3a1b30" strokeWidth="1.400"><path d="M1 12h8" strokeWidth="2" /><path d="M26.500 6.500h7v7h-7zM28.500 4.500H35.500V11.500" /></svg>
              <CloseButton><svg width="8" height="8" stroke="#fff" strokeWidth="1.700"><path d="M.5.5l7 7M7.500.5l-7 7" /></svg></CloseButton>
            </WinButtons>
          </TitleBar>
          <MenuBar>{MENU.map(([m, w]) => <MenuItem key={m} $w={w}>{m}</MenuItem>)}</MenuBar>
          <ToolStrip />
          <Workspace><DataPanel /><Cards /><View /></Workspace>
          <Footer />
        </Main>
      </Screen>
    </>
  );
}
